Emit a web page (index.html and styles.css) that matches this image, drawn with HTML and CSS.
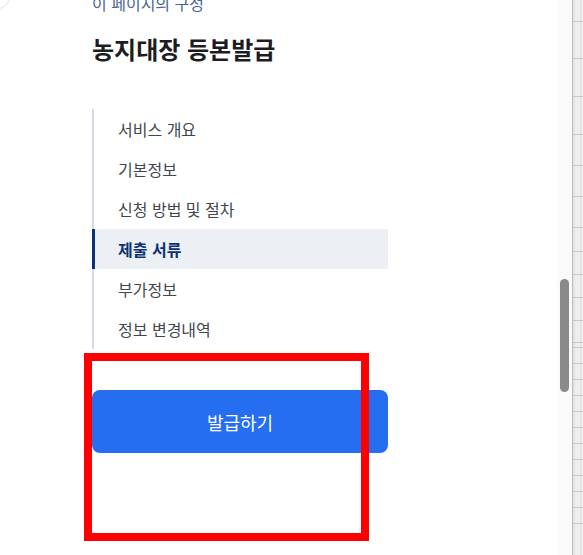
FILE: index.html
```html
<!DOCTYPE html>
<html lang="ko">
<head>
<meta charset="utf-8">
<title>농지대장 등본발급</title>
<link rel="stylesheet" href="styles.css">
</head>
<body>
<div class="page">
  <main class="content">
    <div class="crumb">이 페이지의 구성</div>
    <h1 class="title">농지대장 등본발급</h1>
    <ul class="toc">
      <li class="toc-item">서비스 개요</li>
      <li class="toc-item">기본정보</li>
      <li class="toc-item">신청 방법 및 절차</li>
      <li class="toc-item active">제출 서류</li>
      <li class="toc-item">부가정보</li>
      <li class="toc-item">정보 변경내역</li>
    </ul>
    <button class="issue-btn" type="button">발급하기</button>
  </main>
  <div class="track"><div class="thumb"></div></div>
  <div class="sheet">
    <div class="row" style="height:22px"></div>
    <div class="row" style="height:37px"></div>
    <div class="row" style="height:38px"></div>
    <div class="row" style="height:38px"></div>
    <div class="row" style="height:31px"></div>
    <div class="row" style="height:31px"></div>
    <div class="row" style="height:31px"></div>
    <div class="row" style="height:24px"></div>
    <div class="row" style="height:23px"></div>
    <div class="row" style="height:23px"></div>
    <div class="row" style="height:23px"></div>
    <div class="row" style="height:22px"></div>
    <div class="row" style="height:5px"></div>
    <div class="row" style="height:16px"></div>
    <div class="row" style="height:16px"></div>
    <div class="row" style="height:16px"></div>
    <div class="row" style="height:16px"></div>
    <div class="row" style="height:16px"></div>
    <div class="row" style="height:16px"></div>
    <div class="row" style="height:16px"></div>
    <div class="row" style="height:16px"></div>
    <div class="row" style="height:16px"></div>
    <div class="row" style="height:16px"></div>
    <div class="row" style="height:16px"></div>
  </div>
  <div class="corner"></div>
  <div class="highlight"></div>
</div>
</body>
</html>
```
FILE: styles.css
```css
html, body {
  margin: 0;
  padding: 0;
  height: 100%;
  background: #ffffff;
  overflow: hidden;
}
body {
  font-family: "Noto Sans CJK KR", "Noto Sans", sans-serif;
}
.page {
  position: relative;
  display: flex;
  height: 555px;
  width: 583px;
  overflow: hidden;
}
.content {
  flex: 1;
  padding-left: 92px;
}
.crumb {
  margin-top: -8px;
  font-size: 16px;
  line-height: 22px;
  color: #4a6595;
}
.title {
  margin: 19px 0 0 0;
  font-size: 24px;
  line-height: 32px;
  font-weight: 700;
  color: #1d1d1f;
}
.toc {
  list-style: none;
  margin: 44px 0 0 0;
  padding: 0;
  width: 294px;
  border-left: 2px solid #d3dae3;
}
.toc-item {
  height: 40px;
  line-height: 40px;
  padding-left: 24px;
  font-size: 16px;
  color: #40464d;
}
.toc-item.active {
  margin-left: -2px;
  border-left: 3px solid #0b3275;
  padding-left: 23px;
  background: #ecf0f5;
  color: #0b3275;
  font-weight: 700;
}
.issue-btn {
  display: block;
  margin-top: 41px;
  width: 296px;
  height: 63px;
  border: none;
  border-radius: 8px;
  background: #256ef0;
  color: #ffffff;
  font-family: "Noto Sans CJK KR", "Noto Sans", sans-serif;
  font-size: 18px;
  padding: 0;
}
.track {
  width: 15px;
  background: #fafafa;
  padding-top: 279px;
  box-sizing: border-box;
}
.thumb {
  width: 9px;
  height: 113px;
  margin-left: 3px;
  border-radius: 5px;
  background: #8a8a8a;
}
.sheet {
  width: 10px;
  border-left: 1px solid #bdbdbd;
  background: linear-gradient(to right, #dedede 0, #efefef 3px, #efefef 7px, #dcdcdc 8px, #efefef 9px);
  display: flex;
  flex-direction: column;
}
.row {
  flex: none;
  box-sizing: border-box;
  border-bottom: 1px solid #c9c9c9;
}
.corner {
  position: absolute;
  left: -24px;
  top: -26px;
  width: 34px;
  height: 34px;
  border-radius: 50%;
  border: 1px solid #e3e3e3;
  background: #ffffff;
}
.highlight {
  position: absolute;
  left: 84px;
  top: 353px;
  width: 285px;
  height: 188px;
  box-sizing: border-box;
  border: 8px solid #ff0000;
}
```
